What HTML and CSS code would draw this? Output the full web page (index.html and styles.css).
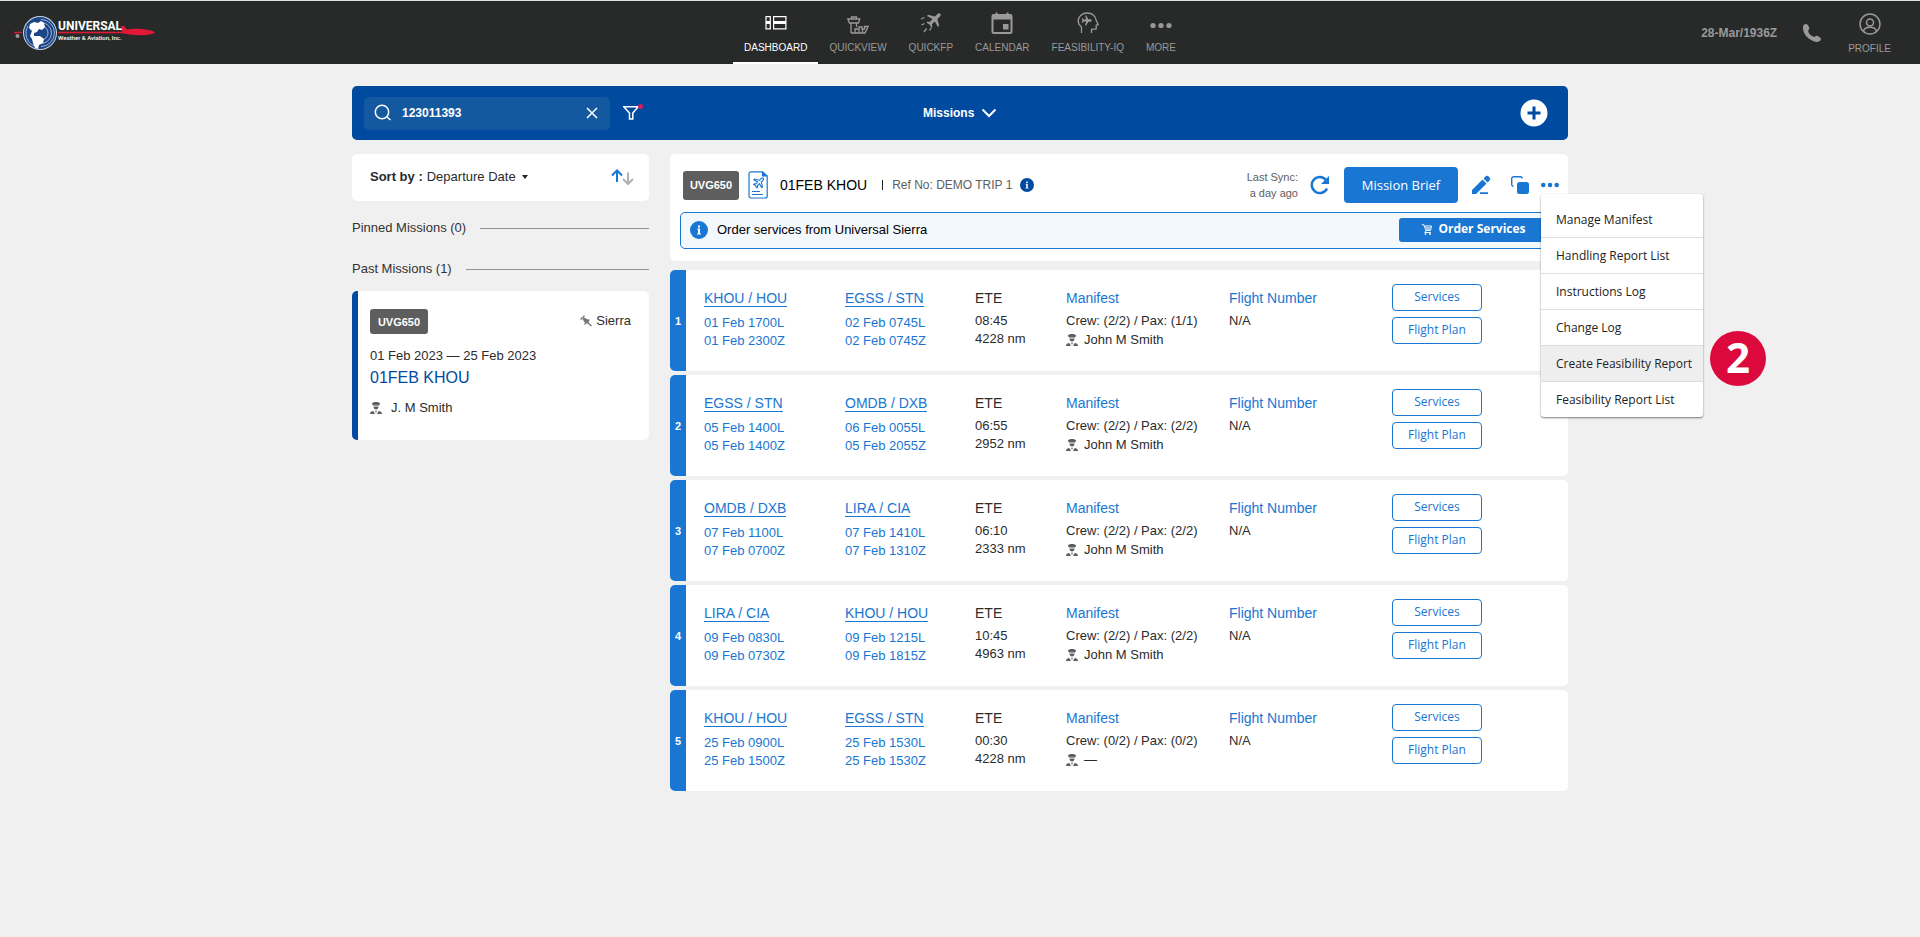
FILE: index.html
```html
<!DOCTYPE html>
<html lang="en">
<head>
<meta charset="utf-8">
<meta name="viewport" content="width=device-width, initial-scale=1">
<title>Missions</title>
<link rel="stylesheet" href="styles.css">
</head>
<body>
<svg class="sprite" aria-hidden="true">
  <symbol id="pilot" viewBox="0 0 12 12">
    <path d="M1.800 1.600C2.200.5 4 0 6 0s3.800.5 4.200 1.600L9 3.600H3z"/>
    <path d="M3.500 4.500h5C8.500 6.400 7.400 7.400 6 7.400S3.500 6.400 3.500 4.500z"/>
    <path d="M0 12c0-1.800 1.200-2.800 3.300-3L5 12zM12 12c0-1.800-1.200-2.800-3.300-3L7 12z"/>
    <path d="M5 8.800h2L6 11z"/>
  </symbol>
  <symbol id="plane" viewBox="0 0 24 24">
    <path d="M21.500 2.500c-1-1-2.700-.8-3.800.3L14 6.500 4.500 4 2.800 5.700 10.500 10l-3.800 4-3-.5L2.200 15l3.900 2.300L8.800 21.800l1.500-1.500-.5-3 4-3.800 4.500 7.700 1.700-1.700-2.500-9.500 3.700-3.700c1.100-1.100 1.300-2.800.3-3.800z"/>
  </symbol>
  <symbol id="info" viewBox="0 0 18 18">
    <circle cx="9" cy="9" r="9"/>
    <path d="M8 4.500h2v2H8zM7.300 7.500H10v5h1v1H7v-1h1v-4h-.7z" fill="#fff"/>
  </symbol>
</svg>

<header class="topbar">
  <a class="logo" href="#" aria-label="Universal Weather &amp; Aviation, Inc.">
    <svg class="logo-art" viewBox="0 0 160 40" width="160" height="40">
      <path d="M0 17.500h8" stroke="#e31837" stroke-width="1.500"/>
      <circle cx="3.500" cy="21" r="2" fill="#999"/>
      <circle cx="26" cy="18" r="17" fill="#c9d3e2"/>
      <circle cx="26" cy="18" r="16" fill="#1c4587"/>
      <g fill="none" stroke="#9db4d6" stroke-width="1"><path d="M27 7.500a10.500 10.500 0 0 1 0 21"/><path d="M27 4.500a13.500 13.500 0 0 1 0 27"/><path d="M27 11a7 7 0 0 1 0 14"/><path d="M20 31a14 14 0 0 1-6-20"/></g>
      <path d="M16 9l4-2 4 1 3-2 3 2 1 4-3 3-3-1-2 3-3 1 0 3 6 0 4 3-1 4-4 2-1 4-3-1-2-5-1-4-2-3 2-5-3-3z" fill="#fff"/>
      <path d="M44 17.500h66" stroke="#e31837" stroke-width="1.500"/>
      <path d="M107 11h3l3 3.500c9-1.500 23-.5 28 3-5 3.500-20 3.500-33 .5z" fill="#e31837"/>
      <text x="44" y="15" class="logo-name">UNIVERSAL</text>
      <text x="44" y="25" class="logo-sub">Weather &amp; Aviation, Inc.</text>
    </svg>
  </a>
  <nav class="nav" aria-label="Main">
    <a class="nav-item active" href="#">
      <svg width="22" height="22" viewBox="0 0 22 22" fill="none" stroke="currentColor" stroke-width="1.200"><path d="M1 4.600h4.300v12.300H1zM8.600 4.600h12.300v12.300H8.600z"/><path d="M1 10.500h4.300M8.600 10.500h12.300" stroke-width="3"/></svg>
      DASHBOARD</a>
    <a class="nav-item" href="#">
      <svg width="22" height="22" viewBox="0 0 22 22" fill="none" stroke="currentColor" stroke-width="1.300"><path d="M4.500 7V5h5v2M.8 7h12l-1.300 4H2.500zM4 11v10M9.500 11v4M4 21h14l3-6.500h-3.500V17H15v-2h-3v2H8v4M12 17v4M15.500 17v4"/></svg>
      QUICKVIEW</a>
    <a class="nav-item" href="#">
      <svg width="22" height="22" viewBox="0 0 22 22" fill="currentColor"><svg x="5" y="0" width="17" height="17"><use href="#plane"/></svg><path d="M1 7l3.500-1.500M1.500 13l3-1.500M4 20l2.500-3.500M9.500 18.500l2-3" stroke="currentColor" stroke-width="1.300"/></svg>
      QUICKFP</a>
    <a class="nav-item" href="#">
      <svg width="22" height="22" viewBox="0 0 22 22" fill="none" stroke="currentColor"><rect x="1.500" y="3" width="19" height="18" rx="1.500" stroke-width="2"/><path d="M1 5h20" stroke-width="5"/><path d="M5.500 .5v4M16.500 .5v4" stroke-width="2"/><path d="M12 12h5.500v5.500H12z" fill="currentColor" stroke="none"/></svg>
      CALENDAR</a>
    <a class="nav-item" href="#">
      <svg width="22" height="22" viewBox="0 0 22 22" fill="none" stroke="currentColor" stroke-width="1.300"><path d="M4.500 21v-6C2.500 13.500 1.200 11.500 1.200 9c0-4.500 4-8 9-8 5.200 0 8.800 3.300 9 7.500l2 4-2 .8v3.500l-4.700.5V21"/><svg x="3.500" y="3" width="11" height="11" viewBox="0 0 24 24" fill="currentColor" stroke="none"><g transform="rotate(45 12 12)"><use href="#plane"/></g></svg></svg>
      FEASIBILITY-IQ</a>
    <a class="nav-item" href="#">
      <svg width="22" height="22" viewBox="0 0 22 22" fill="currentColor"><circle cx="3" cy="13.500" r="2.600"/><circle cx="11" cy="13.500" r="2.600"/><circle cx="19" cy="13.500" r="2.600"/></svg>
      MORE</a>
  </nav>
  <div class="account">
    <time class="clock">28-Mar/1936Z</time>
    <a class="phone" href="#" aria-label="Call">
      <svg width="18" height="18" viewBox="0 0 18 18" fill="currentColor"><path d="M1 .8C2.500-.3 4 0 4.800 1l1.300 2.300c.6 1 .2 2-.8 2.700-.6 3 3.200 6.700 6.700 6.700.8-1 1.800-1.300 2.700-.7l2.400 1.500c1 .7 1 2 .2 3-1.300 1.700-4 1.900-7.300.4C5 15 1 10.500.2 6-.2 3.500 0 1.600 1 .8z"/></svg>
    </a>
    <a class="profile" href="#">
      <svg width="22" height="22" viewBox="0 0 22 22" fill="none" stroke="currentColor" stroke-width="1.500"><circle cx="11" cy="11" r="10"/><circle cx="11" cy="9.500" r="3.500"/><path d="M4.500 18c1.500-5 11.500-5 13 0"/></svg>
      PROFILE</a>
  </div>
</header>

<main class="page">
  <div class="toolbar">
    <div class="search">
      <svg width="18" height="18" viewBox="0 0 18 18" fill="none" stroke="#fff" stroke-width="1.500"><circle cx="8" cy="8" r="6.700"/><path d="M13 13l3.500 3"/></svg>
      <input type="text" aria-label="Search missions" value="123011393">
      <button class="icon-btn" type="button" aria-label="Clear search"><svg width="12" height="12" viewBox="0 0 12 12" fill="none" stroke="#fff" stroke-width="1.500"><path d="M1 1l10 10M11 1L1 11"/></svg></button>
    </div>
    <button class="icon-btn filter" type="button" aria-label="Filter"><svg width="20" height="18" viewBox="0 0 20 18" fill="none" stroke="#fff" stroke-width="1.500"><path d="M.8 2.800h14.400L9.800 9v6h-3.300V9z"/><circle cx="17.500" cy="2.500" r="2.500" fill="#d81b60" stroke="none"/></svg></button>
    <div class="view-pick">
      <select class="bare-select view-select" aria-label="View"><option>Missions</option></select>
      <svg width="16" height="10" viewBox="0 0 16 10" fill="none" stroke="#fff" stroke-width="2"><path d="M1.500 1.500L8 8l6.500-6.500"/></svg>
    </div>
    <button class="icon-btn add" type="button" aria-label="Add mission"><svg width="28" height="28" viewBox="0 0 28 28"><circle cx="14" cy="14" r="13.500" fill="#fff"/><path d="M14 7.500v13M7.500 14h13" stroke="#004a9f" stroke-width="3"/></svg></button>
  </div>

  <div class="columns">
    <aside class="sidebar">
      <div class="sort">
        <label for="sort">Sort by :</label>
        <select id="sort" class="bare-select"><option>Departure Date</option></select>
        <svg class="caret" width="8" height="4" viewBox="0 0 8 4" fill="#222"><path d="M1 0h6L4 4z"/></svg>
        <button class="icon-btn order" type="button" aria-label="Toggle sort order"><svg width="24" height="18" viewBox="0 0 24 18" fill="none" stroke-width="2"><path d="M6 14V3M1 7.500l5-5 5 5" stroke="#1976d2"/><path d="M17 4.500v11M12 11l5 5 5-5" stroke="#b0b0b0"/></svg></button>
      </div>
      <h2 class="group">Pinned Missions (0)</h2>
      <h2 class="group">Past Missions (1)</h2>
      <article class="mission">
        <div class="mission-top">
          <span class="tail tail-small">UVG650</span>
          <span class="source"><svg width="12" height="12" viewBox="0 0 12 12" fill="#777" stroke="#777"><path d="M.7 4.500L4.500.7" stroke-width="1.400"/><path d="M2.500 4l1.500-1.500 4 2L9 8.500 4.800 7.800z" stroke="none"/><path d="M4.500 9.500l5-5M7.500 7.500l4 3.500" stroke-width="1.400"/></svg>Sierra</span>
        </div>
        <p class="mission-dates">01 Feb 2023 — 25 Feb 2023</p>
        <h3 class="mission-name">01FEB KHOU</h3>
        <p class="mission-crew"><svg class="pilot" width="12" height="12"><use href="#pilot"/></svg>J. M Smith</p>
      </article>
    </aside>

    <div class="detail">
      <section class="summary">
        <div class="summary-row">
          <span class="tail tail-large">UVG650</span>
          <svg class="doc" width="20" height="28" viewBox="0 0 20 28" fill="none" stroke="#1976d2" stroke-width="1.200"><path d="M3 .8h11.500L19.200 5v20a2 2 0 0 1-2 2H3a2 2 0 0 1-2-2V2.800a2 2 0 0 1 2-2z"/><path d="M14.500 .8V5h4.700" fill="#1976d2"/><path d="M4 20.500h8M4 23.500h11"/><svg x="4.500" y="6" width="12" height="12" viewBox="0 0 24 24" stroke-width="2.200"><use href="#plane"/></svg></svg>
          <h1 class="summary-name">01FEB KHOU</h1>
          <span class="divider"></span>
          <span class="ref">Ref No: DEMO TRIP 1</span>
          <svg width="14" height="14" fill="#004a9f"><use href="#info"/></svg>
          <p class="sync">Last Sync:<br>a day ago</p>
          <button class="icon-btn refresh" type="button" aria-label="Refresh"><svg width="20" height="20" viewBox="0 0 20 20" fill="none" stroke="#1976d2" stroke-width="2.500"><path d="M17 13.500A8 8 0 1 1 16 5"/><path d="M19 1v8h-8z" fill="#1976d2" stroke="none"/></svg></button>
          <button class="brief" type="button">Mission Brief</button>
          <button class="icon-btn edit" type="button" aria-label="Edit"><svg width="20" height="20" viewBox="0 0 20 20" fill="#1976d2"><path d="M1 19v-4L11.500 4.500l4 4L5 19zM12.500 3.500L15 1q1-.6 2 0l2 2q.6 1 0 2l-2.500 2.500zM9 17.200h8V19H9z"/></svg></button>
          <button class="icon-btn copy" type="button" aria-label="Copy"><svg width="18" height="18" viewBox="0 0 18 18"><path d="M2.500 10.500a2 2 0 0 1-1.800-2V2.700a2 2 0 0 1 2-2h6.600a2 2 0 0 1 2 1.800" fill="none" stroke="#1976d2" stroke-width="1.400"/><rect x="6" y="6" width="12" height="12" rx="2.500" fill="#1976d2"/></svg></button>
          <div class="more">
            <button class="icon-btn" type="button" aria-label="More actions" aria-expanded="true"><svg width="18" height="6" viewBox="0 0 18 6" fill="#1976d2"><circle cx="2.300" cy="3" r="2.300"/><circle cx="9" cy="3" r="2.300"/><circle cx="15.700" cy="3" r="2.300"/></svg></button>
            <ul class="menu">
              <li><button type="button">Manage Manifest</button></li>
              <li><button type="button">Handling Report List</button></li>
              <li><button type="button">Instructions Log</button></li>
              <li><button type="button">Change Log</button></li>
              <li class="hovered"><button type="button">Create Feasibility Report</button><span class="step">2</span></li>
              <li><button type="button">Feasibility Report List</button></li>
            </ul>
          </div>
        </div>
        <div class="notice">
          <svg width="18" height="18" fill="#1976d2"><use href="#info"/></svg>
          <p>Order services from Universal Sierra</p>
          <button class="order-services" type="button"><svg width="10" height="11" viewBox="0 0 10 11" fill="none" stroke="#fff"><path d="M0 .7h1.700L4 6.500h4.500L9.500 2H2.200M4 6.500L2.800 8.500h6" /><path d="M3 3h6L8 6H4z" fill="#9cc4ee" stroke="none"/><circle cx="3.500" cy="10" r=".6"/><circle cx="8" cy="10" r=".6"/></svg>Order Services</button>
        </div>
      </section>

      <article class="leg">
        <span class="leg-no">1</span>
        <div class="stop"><a href="#">KHOU / HOU</a><p>01 Feb 1700L<br>01 Feb 2300Z</p></div>
        <div class="stop"><a href="#">EGSS / STN</a><p>02 Feb 0745L<br>02 Feb 0745Z</p></div>
        <div class="info"><h4>ETE</h4><p>08:45<br>4228 nm</p></div>
        <div class="info linked"><h4>Manifest</h4><p>Crew: (2/2) / Pax: (1/1)</p><p class="captain"><svg class="pilot" width="12" height="12"><use href="#pilot"/></svg>John M Smith</p></div>
        <div class="info linked"><h4>Flight Number</h4><p>N/A</p></div>
        <div class="actions"><button type="button">Services</button><button type="button">Flight Plan</button></div>
      </article>

      <article class="leg">
        <span class="leg-no">2</span>
        <div class="stop"><a href="#">EGSS / STN</a><p>05 Feb 1400L<br>05 Feb 1400Z</p></div>
        <div class="stop"><a href="#">OMDB / DXB</a><p>06 Feb 0055L<br>05 Feb 2055Z</p></div>
        <div class="info"><h4>ETE</h4><p>06:55<br>2952 nm</p></div>
        <div class="info linked"><h4>Manifest</h4><p>Crew: (2/2) / Pax: (2/2)</p><p class="captain"><svg class="pilot" width="12" height="12"><use href="#pilot"/></svg>John M Smith</p></div>
        <div class="info linked"><h4>Flight Number</h4><p>N/A</p></div>
        <div class="actions"><button type="button">Services</button><button type="button">Flight Plan</button></div>
      </article>

      <article class="leg">
        <span class="leg-no">3</span>
        <div class="stop"><a href="#">OMDB / DXB</a><p>07 Feb 1100L<br>07 Feb 0700Z</p></div>
        <div class="stop"><a href="#">LIRA / CIA</a><p>07 Feb 1410L<br>07 Feb 1310Z</p></div>
        <div class="info"><h4>ETE</h4><p>06:10<br>2333 nm</p></div>
        <div class="info linked"><h4>Manifest</h4><p>Crew: (2/2) / Pax: (2/2)</p><p class="captain"><svg class="pilot" width="12" height="12"><use href="#pilot"/></svg>John M Smith</p></div>
        <div class="info linked"><h4>Flight Number</h4><p>N/A</p></div>
        <div class="actions"><button type="button">Services</button><button type="button">Flight Plan</button></div>
      </article>

      <article class="leg">
        <span class="leg-no">4</span>
        <div class="stop"><a href="#">LIRA / CIA</a><p>09 Feb 0830L<br>09 Feb 0730Z</p></div>
        <div class="stop"><a href="#">KHOU / HOU</a><p>09 Feb 1215L<br>09 Feb 1815Z</p></div>
        <div class="info"><h4>ETE</h4><p>10:45<br>4963 nm</p></div>
        <div class="info linked"><h4>Manifest</h4><p>Crew: (2/2) / Pax: (2/2)</p><p class="captain"><svg class="pilot" width="12" height="12"><use href="#pilot"/></svg>John M Smith</p></div>
        <div class="info linked"><h4>Flight Number</h4><p>N/A</p></div>
        <div class="actions"><button type="button">Services</button><button type="button">Flight Plan</button></div>
      </article>

      <article class="leg">
        <span class="leg-no">5</span>
        <div class="stop"><a href="#">KHOU / HOU</a><p>25 Feb 0900L<br>25 Feb 1500Z</p></div>
        <div class="stop"><a href="#">EGSS / STN</a><p>25 Feb 1530L<br>25 Feb 1530Z</p></div>
        <div class="info"><h4>ETE</h4><p>00:30<br>4228 nm</p></div>
        <div class="info linked"><h4>Manifest</h4><p>Crew: (0/2) / Pax: (0/2)</p><p class="captain"><svg class="pilot" width="12" height="12"><use href="#pilot"/></svg>—</p></div>
        <div class="info linked"><h4>Flight Number</h4><p>N/A</p></div>
        <div class="actions"><button type="button">Services</button><button type="button">Flight Plan</button></div>
      </article>
    </div>
  </div>
</main>
</body>
</html>
```
FILE: styles.css
```css
* { box-sizing: border-box; margin: 0; padding: 0; }
:root { --blue: #1976d2; --navy: #004a9f; --ink: #2b2b2b; --muted: #5e5e5e; }
body { background: #f0f0f0; color: var(--ink); font: 13px/18px "Liberation Sans", Arial, sans-serif; }
a { color: inherit; text-decoration: none; }
button, input, select { font: inherit; color: inherit; border: 0; background: none; }
svg { display: block; flex: none; }
h1, h2, h3, h4 { font-weight: 400; }
ul { list-style: none; }
.sprite { position: absolute; width: 0; height: 0; }
.icon-btn { display: flex; flex: none; cursor: pointer; }

.topbar { display: grid; grid-template-columns: 1fr auto 1fr; height: 64px; border-top: 1px solid #dce3e0; background: #282a29; color: #999; }
.logo { padding: 14px 0 0 14px; justify-self: start; }
.logo-name { fill: #fff; font: 700 12px Roboto, sans-serif; }
.logo-sub { fill: #fff; font: 500 6px Roboto, sans-serif; }
.nav { display: flex; }
.nav-item, .profile { display: flex; flex-direction: column; align-items: center; gap: 8px; padding: 11px 11px 0; font-size: 10px; line-height: 12px; }
.nav-item { border-bottom: 2px solid transparent; }
.nav-item.active { color: #fff; border-color: #fff; }
.account { display: flex; justify-self: end; align-items: center; padding-right: 29px; }
.profile { align-self: stretch; padding: 12px 0 0; margin-left: 27px; }
.clock { margin-right: 26px; font-size: 12px; font-weight: 700; }

.page { max-width: 1216px; margin: 0 auto; padding: 22px 0; }
.toolbar { position: relative; display: flex; align-items: center; height: 54px; padding: 0 20px 0 12px; border-radius: 5px; background: var(--navy); color: #fff; }
.search { display: flex; align-items: center; gap: 10px; width: 246px; height: 33px; padding: 0 12px 0 10px; border-radius: 5px; background: #14599f; }
.search input { flex: 1; min-width: 0; font-size: 12px; font-weight: 700; outline: none; }
.filter { margin-left: 13px; }
.view-pick { position: absolute; left: 50%; transform: translateX(-50%); display: flex; align-items: center; gap: 6px; }
.bare-select { appearance: none; line-height: 18px; cursor: pointer; }
.view-select { font-size: 12px; font-weight: 700; }
.view-select option { color: var(--ink); }
.add { margin-left: auto; }

.columns { display: grid; grid-template-columns: 297px 1fr; gap: 21px; margin-top: 14px; align-items: start; }
.sort { display: flex; align-items: center; height: 47px; padding: 0 14px 2px 18px; border-radius: 5px; background: #fff; }
.sort label { margin-right: 4px; font-weight: 700; }
.caret { margin-left: 5px; }
.order { margin-left: auto; }
.group { display: flex; align-items: center; gap: 14px; margin-top: 18px; color: #333; font-size: 13px; line-height: 18px; }
.group + .group { margin-top: 23px; }
.group::after { content: ""; flex: 1; height: 1px; background: #949494; }
.mission { margin-top: 13px; min-height: 149px; padding: 18px 18px 18px 12px; border-left: 6px solid var(--navy); border-radius: 5px; background: #fff; }
.mission-top { display: flex; justify-content: space-between; align-items: flex-start; }
.source { display: flex; align-items: center; gap: 4px; padding-top: 3px; }
.tail { display: flex; flex: none; align-items: center; justify-content: center; border-radius: 3px; background: var(--muted); color: #fff; font-size: 11px; font-weight: 700; }
.tail-small { width: 58px; height: 25px; }
.tail-large { width: 56px; height: 29px; }
.mission-dates { margin-top: 13px; }
.mission-name { margin-top: 1px; color: var(--navy); font-size: 16px; line-height: 24px; }
.mission-crew { display: flex; align-items: center; gap: 9px; margin-top: 9px; }
.pilot { fill: var(--muted); }

.summary { margin-bottom: 9px; padding: 13px 9px 12px 10px; border-radius: 5px; background: #fff; }
.summary-row { display: flex; align-items: center; height: 36px; padding-left: 3px; margin-bottom: 9px; }
.doc { margin-left: 9px; }
.summary-name { margin-left: 12px; color: #000; font-size: 14px; }
.divider { width: 1px; height: 10px; margin: 0 9px 0 15px; background: #222; }
.ref { margin-right: 8px; color: var(--muted); font-size: 12px; }
.sync { margin-left: auto; color: var(--muted); font-size: 11px; line-height: 16px; text-align: right; }
.refresh { margin-left: 12px; }
.brief { width: 114px; height: 36px; margin-left: 14px; padding-bottom: 1px; border-radius: 4px; background: var(--blue); color: #fff; font-family: "Open Sans", sans-serif; }
.edit { margin-left: 13px; }
.copy { margin-left: 20px; }
.more { position: relative; margin-left: 12px; }
.menu { position: absolute; z-index: 2; left: 0; top: 12px; width: 162px; padding-top: 8px; border-radius: 3px; background: #fff; box-shadow: 0 1px 2px rgba(0, 0, 0, .5); }
.menu li { position: relative; border-bottom: 1px solid #dcdce4; }
.menu li:last-child { border-bottom: 0; }
.menu button { display: block; width: 100%; height: 35px; padding-left: 15px; color: #222; font-family: "Open Sans", sans-serif; font-size: 12px; text-align: left; white-space: nowrap; }
.hovered { background: #eee; }
.step { position: absolute; left: 169px; top: -15px; display: flex; align-items: center; justify-content: center; width: 56px; height: 55px; padding-bottom: 4px; border-radius: 50%; background: #dc0a3c; color: #fff; font: 700 42px/48px "Open Sans", sans-serif; }
.notice { display: flex; align-items: center; height: 37px; padding: 0 9px 1px; border: 1px solid var(--blue); border-radius: 5px; background: #f3f8fd; color: #000; }
.notice p { margin-left: 9px; }
.order-services { display: flex; align-items: center; justify-content: center; gap: 6px; width: 150px; height: 24px; padding-bottom: 2px; margin-left: auto; border-radius: 3px; background: var(--blue); color: #fff; font: 700 12px/18px "Open Sans", sans-serif; }

.leg { display: grid; grid-template-columns: 34px 141fr 130fr 91fr 163fr 163fr 176fr; min-height: 101px; margin-bottom: 4px; border-radius: 5px; background: #fff; overflow: hidden; }
.leg > div { padding-top: 20px; }
.leg-no { display: flex; align-items: center; justify-content: center; width: 16px; background: var(--blue); color: #fff; font-size: 11px; font-weight: 700; }
.stop, .linked h4 { color: var(--blue); }
.stop a, .info h4 { display: inline-block; font-size: 14px; line-height: 16px; }
.stop a { line-height: 15px; border-bottom: 1px solid var(--blue); }
.stop p { margin-top: 6px; }
.info h4 { display: block; margin-bottom: 6px; }
.captain { display: flex; align-items: center; gap: 6px; margin-top: 1px; }
.leg > .actions { display: flex; flex-direction: column; gap: 6px; padding-top: 14px; }
.actions button { width: 90px; height: 27px; padding-bottom: 2px; border: 1px solid var(--blue); border-radius: 4px; color: var(--blue); font-family: "Open Sans", sans-serif; font-size: 12px; }
```
